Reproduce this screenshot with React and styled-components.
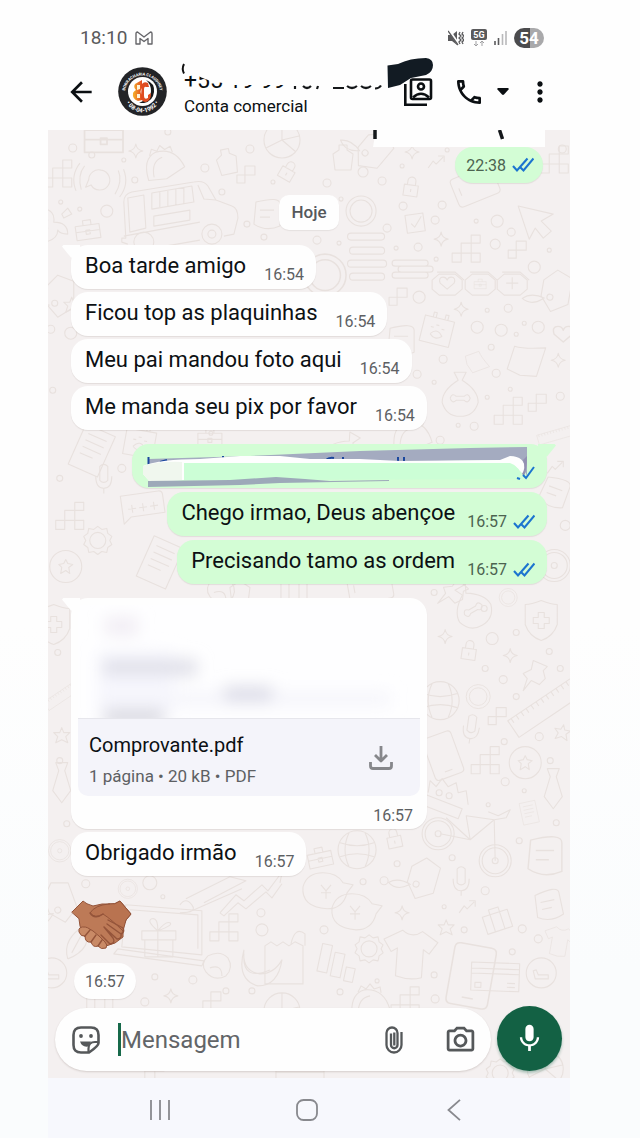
import React from "react";
import styled, { createGlobalStyle, css } from "styled-components";
import { MdArrowBack, MdOutlineCall, MdMoreVert, MdMic, MdOutlinePhotoCamera } from "react-icons/md";

const GlobalStyle = createGlobalStyle`
  *, *::before, *::after { box-sizing: border-box; }
  body { margin: 0; background: #fefefe; font-family: Roboto, "Noto Sans", sans-serif; }
  button { border: 0; padding: 0; background: none; color: inherit; font: inherit; cursor: pointer; }
  svg { display: block; flex: none; }
`;

const Page = styled.div`
  min-height: 100vh;
  display: flex;
  padding: 0 70px 0 48px;
  background: linear-gradient(#fefefe 55%, #fafcfd 85%);
`;

const Phone = styled.div`
  flex: 1;
  min-width: 0;
  display: flex;
  flex-direction: column;
  background: #fefefe;
`;

const StatusBar = styled.div`
  height: 55px;
  padding: 20px 26px 0 32px;
  display: flex;
  align-items: center;
  gap: 8px;
  color: #5a5a5c;
`;

const Clock = styled.time`
  font-size: 19px;
  line-height: 24px;
`;

const StatusIcons = styled.div`
  margin-left: auto;
  display: flex;
  align-items: center;
  gap: 7px;
`;

const Battery = styled.span`
  width: 30px;
  height: 20px;
  border-radius: 10px;
  background: linear-gradient(90deg, #4b4b4d 52%, #a9a9ab 52%);
  color: #fff;
  font-size: 17px;
  font-weight: 700;
  line-height: 20px;
  text-align: center;
`;

const Header = styled.header`
  height: 75px;
  padding: 0 14px 2px 17px;
  display: flex;
  align-items: center;
  color: #0b0f12;
`;

const IconButton = styled.button`
  position: relative;
  width: ${(p) => p.$width || 32}px;
  height: 32px;
  flex: none;
  display: grid;
  place-items: center;
  margin-left: ${(p) => p.$gap || 0}px;
  color: ${(p) => p.$color || "inherit"};
`;

const Avatar = styled.svg`
  margin-left: 21px;
`;

const Contact = styled.div`
  position: relative;
  flex: 1;
  min-width: 0;
  margin: 2px 0 0 17px;
  white-space: nowrap;
`;

const ContactName = styled.h1`
  margin: 0;
  font-size: 23px;
  font-weight: 400;
  line-height: 26px;
`;

const ContactKind = styled.p`
  margin: 0;
  padding-top: 1px;
  font-size: 17px;
  line-height: 22px;
`;

const NameScribble = styled.svg`
  position: absolute;
  left: -4px;
  top: -12px;
`;

const BlackMark = styled.svg`
  position: absolute;
  left: -16px;
  top: -20px;
`;

const Chat = styled.main`
  position: relative;
  isolation: isolate;
  flex: 1;
  display: flex;
  flex-direction: column;
  background: #f4f0f0;
  overflow: hidden;
`;

const Wallpaper = styled.svg`
  position: absolute;
  inset: 0;
  width: 100%;
  height: 100%;
  z-index: -1;
`;

const Messages = styled.div`
  flex: 1;
  padding: 0 23px 7px;
  display: flex;
  flex-direction: column;
`;

const Group = styled.section`
  display: flex;
  flex-direction: column;
  align-items: ${(p) => (p.$out ? "flex-end" : "flex-start")};
  gap: ${(p) => (p.$out ? 4 : 3)}px;
  margin-top: ${(p) => p.$top || 0}px;
`;

const tailShape = css`
  &::before {
    content: "";
    position: absolute;
    top: 0;
    width: 18px;
    height: 14px;
    background: inherit;
    ${(p) =>
      p.$out
        ? "right: -9px; clip-path: polygon(0 0, 92% 0, 100% 10%, 50% 90%, 0 100%);"
        : "left: -9px; clip-path: polygon(100% 0, 8% 0, 0 10%, 50% 90%, 100% 100%);"}
  }
`;

const Bubble = styled.div`
  position: relative;
  display: flex;
  min-height: 44px;
  padding: 0 12px 0 14px;
  gap: ${(p) => (p.$out ? 12 : 18)}px;
  border-radius: 17px;
  background: ${(p) => (p.$out ? "#d3fdd5" : "#fefefe")};
  box-shadow: 0 1px 1px rgba(70, 50, 40, 0.1);
  color: #0c1013;
  ${(p) => p.$tail && tailShape}
`;

const MessageText = styled.span`
  font-size: 22px;
  line-height: 41px;
`;

const Meta = styled.span`
  align-self: flex-end;
  display: flex;
  align-items: center;
  gap: 6px;
  padding-bottom: 4px;
  font-size: 16px;
  line-height: 20px;
  color: ${(p) => (p.$out ? "#4c6350" : "#5d6063")};
`;

const HiddenPhoto = styled.svg`
  margin-right: 2px;
`;

const TimePill = styled.div`
  display: flex;
  align-items: center;
  gap: 6px;
  height: 36px;
  padding: 0 ${(p) => (p.$out ? 9 : 11)}px 0 11px;
  margin: ${(p) => (p.$out ? "-4px 4px 0 0" : "9px 0 0 3px")};
  border-radius: 18px;
  background: ${(p) => (p.$out ? "#d3fdd5" : "#fefefe")};
  box-shadow: 0 1px 1px rgba(70, 50, 40, 0.1);
  color: ${(p) => (p.$out ? "#4c6350" : "#5d6063")};
  font-size: 16px;
`;

const DayLabel = styled.div`
  align-self: center;
  margin-top: 12px;
  padding: 0 12px;
  border-radius: 10px;
  background: #fefefe;
  box-shadow: 0 1px 1px rgba(70, 50, 40, 0.08);
  color: #55585b;
  font-size: 17px;
  font-weight: 500;
  line-height: 35px;
`;

const RedactedBubble = styled(Bubble)`
  padding: 0;
`;

const DocumentCard = styled(Bubble)`
  width: 356px;
  max-width: 100%;
  flex-direction: column;
  gap: 0;
  padding: 7px 7px 0;
`;

const Preview = styled.svg`
  width: 100%;
  height: 113px;
`;

const FileRow = styled.div`
  display: flex;
  align-items: center;
  height: 78px;
  padding: 0 23px 0 11px;
  border-top: 1px solid #e6e6ec;
  border-radius: 0 0 10px 10px;
  background: #f4f4fa;
`;

const FileInfo = styled.div`
  flex: 1;
  padding-top: 4px;
`;

const FileName = styled.div`
  font-size: 20px;
  line-height: 28px;
`;

const FileDetails = styled.div`
  padding-top: 4px;
  font-size: 17px;
  line-height: 26px;
  color: #5d6063;
`;

const FileMeta = styled.div`
  padding: 7px 7px 0;
  text-align: right;
  font-size: 16px;
  line-height: 26px;
  height: 33px;
  color: #5d6063;
`;

const Handshake = styled.svg`
  margin-top: 20px;
`;

const Composer = styled.form`
  display: flex;
  align-items: flex-end;
  gap: 6px;
  padding: 0 8px 7px 7px;
`;

const InputPill = styled.div`
  flex: 1;
  min-width: 0;
  height: 63px;
  display: flex;
  align-items: center;
  padding: 0 15px;
  border-radius: 32px;
  background: #fefefe;
  box-shadow: 0 1px 2px rgba(70, 50, 40, 0.18);
  color: #55585a;
`;

const Caret = styled.span`
  width: 3px;
  height: 33px;
  margin-left: 16px;
  background: #17694a;
`;

const MessageInput = styled.input`
  flex: 1;
  min-width: 0;
  border: 0;
  outline: 0;
  padding: 0;
  background: transparent;
  font: 24px/32px Roboto, "Noto Sans", sans-serif;
  color: #0c1013;
  &::placeholder { color: #626568; opacity: 1; }
`;

const MicButton = styled.button`
  width: 65px;
  height: 65px;
  flex: none;
  display: grid;
  place-items: center;
  border-radius: 50%;
  background: #136144;
  color: #fff;
  box-shadow: 0 2px 3px rgba(20, 97, 68, 0.35);
`;

const NavBar = styled.nav`
  height: 61px;
  display: flex;
  align-items: center;
  justify-content: space-around;
  padding: 2px 42px 0 38px;
  background: #f7f8fd;
  color: #88898e;
`;

const Ticks = () => (
  <svg width="22" height="16" viewBox="0 0 22 16" fill="none" stroke="#1c74cf" strokeWidth="2.1">
    <path d="M1 9l4 4.500L15.500 1.500M8.500 10.500l3 3L21.500 1.500" />
  </svg>
);

/* Small drawings that are scattered over the chat background, each centred on 0,0. */
const doodles = {
  sparkle: "M0-7Q1-1 7 0Q1 1 0 7Q-1 1-7 0Q-1-1 0-7Z",
  star: "M0-8l2 5 6 0-4 4 2 6-6-3-6 3 2-6-4-4 6 0z",
  squares: "M-14 4h9v9h-9zM-5-6h10v10h-10zM5-14h9v8h-9zM5 4h9v9h-9z",
  pair: "M-9 0h8v8h-8zM-1-9h10v9h-10z",
  lock: "M-7-2h14v11h-14zM-4-2v-4a4 4 0 0 1 8 0v4M0 2v3",
  lines: "M-15-24h30a3 3 0 0 1 0 7h-30a3 3 0 0 1 0-7M-13-10h28a3 3 0 0 1 0 7h-28a3 3 0 0 1 0-7M-15 3h32a3 3 0 0 1 0 7h-32a3 3 0 0 1 0-7M-13 16h28a3 3 0 0 1 0 7h-28a3 3 0 0 1 0-7",
  bars: "M-16-8h30a3 3 0 0 1 0 6h-30a3 3 0 0 1 0-6M-10-2h29a3 3 0 0 1 0 6h-29a3 3 0 0 1 0-6M-16 4h30a3 3 0 0 1 0 6h-30a3 3 0 0 1 0-6",
  ring: "M-15 0a15 15 0 1 0 30 0a15 15 0 1 0-30 0M-11 0a11 11 0 1 0 22 0a11 11 0 1 0-22 0",
  disc: "M-16 0a16 16 0 1 0 32 0a16 16 0 1 0-32 0M-3 0a3 3 0 1 0 6 0a3 3 0 1 0-6 0M-13 0a13 13 0 1 0 26 0a13 13 0 1 0-26 0",
  pie: "M-18 0a18 18 0 1 0 36 0a18 18 0 1 0-36 0M0 0v-18M0 0l14 12M0 0l-16 8M0 0l17-4",
  check: "M-9-9h18v18h-18zM-4 0l3 4 8-10",
  checkDisc: "M-15 0a15 15 0 1 0 30 0a15 15 0 1 0-30 0M-8-2l2 8h13v-4l-10 0-2-5z",
  starDisc: "M-16 0a16 16 0 1 0 32 0a16 16 0 1 0-32 0M0-7l2 4 5 1-4 3 1 6-4-3-5 3 1-6-3-3 5-1z",
  cursor: "M-18-16l35 8-12 7 10 10-8 7-8-10-6 11z",
  pill: "M-8-10h16l7 6v9l-7 6h-16l-7-6v-9zM-10-12h18l9 8",
  heart: "M0 6l-7-6q-2-6 3-6 3 0 4 3 1-3 4-3 5 0 3 6z",
  plus: "M-6 0h12M0-6v12",
  tag: "M-14-8l12-12 16 6v26l-16 10-12-14zM-8 8a3 3 0 1 0 6 0a3 3 0 1 0-6 0M-10 10q-14-4-22 4 10 6 20-3",
  bag: "M-15-12h30v26h-30zM-7-12v-5h3v5M5-12v-5h3v5M-6 5q6-8 12 0-6 6-12 0M-7-2h3M-2-5h3M4-2h3",
  sack: "M-6-20h12l-4 8q16 10 16 22-4 14-18 14t-18-14q0-12 16-22zM-10 6q2-6 6-2h8q4-4 6 2-2 6-6 2h-8q-4 4-6-2",
  van: "M-52 32-58 30V26H-54L-56-10Q-56-18-48-20L14-30Q24-32 28-26L36-12 52-6Q58-4 58 6 56 14 54 22L44 24M20 28-26 36M-56 24 20 10M-52-14-36-17-34 16-50 20ZM-28-19 12-26 14-10-28-3ZM-20-20V-5M-12-22V-6M-4-23V-7M4-25V-8M18-27 24-13 36-12M-26 4 10-2V8L-26 14ZM-46 30a10 10 0 1 0 20 0a10 10 0 1 0-20 0M22 22a10 10 0 1 0 20 0a10 10 0 1 0-20 0M28 22a4 4 0 1 0 8 0a4 4 0 1 0-8 0",
  taco: "M-18 12q-2-22 12-26 20-2 26 20l-20 8zM-12 10q0-16 12-18M-12-12l3-6 5 3 4-5 4 5 6-2 1 6",
  chat: "M0-10a10 10 0 1 1-8 16l-5 3 2-8a10 10 0 0 1 11-11M-17-12q-6 10 0 24M17-12q6 10 0 24M-22-14q-8 14 0 28M22-14q8 14 0 28",
  scissors: "M-14-16q14 2 12 14 14 0 14 12-8 0-10-4 0 10-14 12l4-14-8-2 8-6zM6-10l6-6 4 6-8 4z",
  case: "M-12-5h24v14h-24zM-4-5v-5h8v5M-12 1h24M-2 0h4v4h-4z",
  bottle: "M-4-12h8v5l6 4-2 16h-16l-2-16 6-4z",
  note: "M-16-22h32v44h-32zM-10-14h20M-10-7h20M-10 0h20M-10 7h14",
  pad: "M-20-12h38q4 0 4 4v18h-34l-8 6zM-10-2v8M-14 2h8M1-2v8M-3 2h8M12-2v8M8 2h8",
  shield: "M0-20q10 4 16 4v20q-4 12-16 16-12-4-16-16v-20q6 0 16-4M-3-8h6v5h5v6h-5v5h-6v-5h-5v-6h5z",
  pin: "M-2-12l14 6-4 4 2 8-6 6-8-4-8 10 4-12-4-5 8-4z",
  ruler: "M-42-10h84v20h-84zM-38-10v5M-32-10v5M-26-10v5M-20-10v5M-14-10v5M-8-10v5M-2-10v5M4-10v5M10-10v5M16-10v5M22-10v5M28-10v5M34-10v5",
  mobile: "M-11-22h22q4 0 4 4v36q0 4-4 4h-22q-4 0-4-4v-36q0-4 4-4M-4 16h8",
  mic: "M-4-12q4-4 8 0v14q-4 4-8 0zM-8-2q0 12 8 12t8-12M0 10v5",
  tie: "M-6-20h12l-3 8 6 20-9 12-9-12 6-20z",
  globe: "M-19 0a19 19 0 1 0 38 0a19 19 0 1 0-38 0M-8-17q-8 17 0 34M8-17q8 17 0 34M-17-7q17 6 34 0M-17 7q17-6 34 0",
  blob: "M-22-4q4-14 20-14 14 0 20 10l10 2-6 8q-4 16-20 16-26-2-24-22M-4-6l5 6 5-6M1 0v8M-4 2h10",
  shirt: "M-10-22q10 8 20 0l16 10-8 12-6-4v28q-12 4-26 0v-28l-6 4-8-12z",
  gear: "M-8 0a8 8 0 1 0 16 0a8 8 0 1 0-16 0M0-14l4 3 5-1 1 5 4 3-2 4 2 4-4 3-1 5-5-1-4 3-4-3-5 1-1-5-4-3 2-4-2-4 4-3 1-5 5 1z",
  columns: "M-18-16h10v28h-10zM-4-10h10v24h-10zM10 2h9v14h-9z",
  card: "M-24-14h48v28h-48zM-24-8h48M-24-3h48M-20 6h6v5h-6zM12 6h8M12 10h8",
  zigzag: "M-34 18l16-18 8 6 18-16 6 6 12-16 2-2-2 10M-34 18l4 3 14-13 8 6 20-17 6 6 10-14",
  arrow: "M-9 6l5-7 3 3 7-7M1-6h6v6",
  laptop: "M-34-30l76 6v44l-80-8zM-30-25l68 5v34M-42 14l86 12-2 5-88-12z",
  gift: "M-16-8h34v9h-34zM-13 1h28v17h-28zM0-8v26M0-8q-12-10-6-12t6 12q8-10 12-8t-12 8",
  cookie: "M-10-10q12-6 20 2 6 10-2 18-12 6-20-4-6-8 2-16M-8 2q12-4 12 8",
  banana: "M-18-16q-2 22 16 24 14 0 22-14-4 26-24 26-22-6-14-36M-18-12q-2 28 26 16",
  grocer: "M-20-20l6-4 6 4 6-4 6 4 6-4 8 4v38h-38zM6-22q4-18 14-10v12",
  leaf: "M-12 18q-6-20 18-34 8 24-18 34M-8 12l12-22",
  scroll: "M-20 14q6-8 12 0t-12 8M-14 8l44-22 16 4-42 22M-8 20l50-22",
  case2: "M-13-8h26v18h-26zM-5-8v-5h10v5M-5-8v18M5-8v18",
  frame: "M-15-12q10 0 30-8v30l-16 4-14-2z",
  basket: "M-24-4l36 14-4 10-36-14zM-22-6l2-12 6 6 6-8 6 8 8-4 2 10 8-2 2 14M-14-6a3 3 0 1 0 6 0a3 3 0 1 0-6 0M-4-3a3 3 0 1 0 6 0a3 3 0 1 0-6 0",
  bike: "M-40-12-10-6M-34-28-10-6 14-26-14-30-10-6M14-26 15 15M8-34 18-30 30-36 26-28 14-26",
  cloth: "M-12-12q24-6 24 2v22q-14 6-26-2zM-8-4h14M-8 3h10",
};

const placed = [
  ["van", 180, 212], ["taco", 164, 165, -12], ["chat", 100, 180, 8], ["pie", 282, 140], ["bottle", 227, 161, -12],
  ["lock", 288, 171, 30], ["squares", 58, 174], ["pair", 246, 175], ["sparkle", 136, 151], ["scissors", 56, 224],
  ["case", 88, 230, -8], ["cloth", 268, 214], ["case", 104, 138, 0, 1.6], ["bottle", 343, 157], ["sparkle", 412, 152],
  ["arrow", 437, 162], ["lock", 411, 187, 8], ["mobile", 475, 186, 68], ["squares", 554, 160], ["tag", 374, 150, 40],
  ["ring", 361, 211], ["check", 415, 223, -8], ["cursor", 536, 222], ["sparkle", 441, 239], ["lines", 366, 257],
  ["bars", 411, 268], ["pill", 447, 284], ["heart", 447, 283], ["pill", 480, 284], ["case", 480, 284, 0, 0.5],
  ["pill", 512, 284], ["plus", 512, 283], ["tag", 556, 290, 10], ["squares", 466, 249], ["pair", 517, 250],
  ["pair", 398, 297], ["sparkle", 461, 309], ["bag", 437, 330, 14], ["sack", 460, 392], ["frame", 525, 362, 18],
  ["sparkle", 558, 360], ["heart", 563, 334, 0, 1.3], ["frame", 475, 362, 70, 0.6], ["squares", 508, 411], ["pair", 537, 403],
  ["ring", 325, 275, 0, 1.4], ["cloth", 402, 340, 0, 1], ["sack", 345, 452, 30], ["ruler", 558, 434, -16, 0.5],
  ["star", 72, 305], ["tag", 60, 295], ["note", 92, 450, 24], ["bag", 140, 442, 10], ["case", 210, 438],
  ["taco", 412, 436], ["arrow", 556, 467], ["disc", 554, 565], ["cloth", 555, 492, 20], ["pad", 142, 505, -8],
  ["note", 160, 562, 24], ["squares", 70, 516], ["starDisc", 66, 566], ["mic", 104, 478], ["gear", 98, 540],
  ["case2", 294, 590], ["cookie", 222, 590], ["mobile", 370, 586, 80], ["bottle", 240, 590],
  ["pin", 455, 590, 20], ["shield", 541, 620], ["ring", 508, 597, 0, 0.6], ["sack", 470, 604, -30], ["lock", 469, 650, 8],
  ["sparkle", 445, 636], ["sparkle", 510, 655], ["pin", 535, 672], ["ring", 478, 696, 0, 0.8], ["ruler", 548, 705, -34],
  ["mobile", 443, 755, -20], ["globe", 440, 700], ["mic", 471, 728, 8], ["pair", 497, 716], ["squares", 485, 760],
  ["starDisc", 525, 762], ["tie", 553, 788], ["star", 562, 732, 10], ["basket", 450, 798], ["disc", 438, 833],
  ["disc", 495, 860], ["bike", 480, 845], ["note", 529, 812, -12, 0.5], ["globe", 357, 849], ["case", 320, 857, -12],
  ["lock", 394, 838, -12], ["tag", 423, 877, 16], ["mic", 461, 880], ["cloth", 546, 855, 0, 1.3], ["blob", 325, 890],
  ["blob", 354, 911], ["sparkle", 402, 912], ["case2", 497, 920, -18], ["star", 446, 927], ["shirt", 411, 952, 4],
  ["gear", 369, 948], ["columns", 337, 962, 12], ["mobile", 471, 975, 10, 1.4], ["card", 495, 976, 2], ["checkDisc", 541, 972],
  ["cloth", 549, 904, -12], ["arrow", 468, 906], ["taco", 370, 1003], ["squares", 405, 1000], ["scroll", 200, 890],
  ["zigzag", 254, 894], ["laptop", 160, 934], ["gift", 158, 938], ["squares", 224, 927], ["cookie", 218, 965],
  ["banana", 262, 965], ["grocer", 285, 965], ["sparkle", 171, 995], ["checkDisc", 52, 972], ["pie", 282, 1010],
  ["disc", 128, 888, 0, 0.6], ["tag", 60, 900, -20], ["case2", 100, 1004], ["pair", 212, 1000], ["leaf", 80, 940],
  ["shield", 54, 624], ["ruler", 64, 694, -34, 0.5], ["tie", 62, 782], ["star", 62, 735], ["disc", 60, 850, 0, 0.7],
  ["gear", 500, 1072], ["squares", 150, 1076], ["shirt", 560, 940, 10, 0.6], ["pie", 545, 1068], ["card", 300, 1074],
];

const dots = [
  [73, 148, 4], [92, 155, 3], [124, 160, 2], [168, 132, 3], [135, 180, 3], [205, 168, 4], [250, 149, 4], [273, 182, 2], [61, 202, 2],
  [80, 209, 2], [107, 211, 6], [222, 192, 3], [247, 224, 3], [264, 237, 3], [327, 183, 4], [363, 172, 5], [341, 199, 2], [382, 181, 4],
  [402, 166, 2], [447, 150, 2], [480, 137, 4], [562, 149, 4], [403, 206, 4], [442, 205, 4], [435, 220, 4], [387, 228, 4], [497, 221, 6],
  [476, 221, 2], [511, 232, 4], [317, 240, 4], [339, 243, 2], [396, 248, 2], [418, 247, 4], [436, 259, 2], [534, 267, 6], [549, 250, 2],
  [495, 244, 5], [419, 297, 6], [487, 310, 2], [508, 308, 4], [477, 327, 6], [501, 330, 6], [538, 327, 6], [524, 323, 2], [516, 334, 2],
  [491, 347, 3], [443, 359, 4], [417, 374, 4], [496, 373, 4], [434, 382, 2], [487, 397, 2], [510, 389, 2], [560, 396, 4], [458, 425, 2],
  [474, 426, 4], [53, 390, 3], [51, 329, 4], [71, 333, 6], [60, 478, 3], [122, 468, 4], [440, 440, 4], [211, 433, 2], [565, 525, 5],
  [434, 592, 3], [484, 608, 3], [492, 638, 6], [516, 632, 3], [549, 651, 3], [485, 668, 3], [560, 668, 3], [503, 679, 4], [516, 696, 3],
  [539, 736, 4], [504, 741, 3], [550, 760, 3], [505, 781, 4], [488, 804, 2], [524, 790, 2], [556, 822, 3], [519, 840, 3], [452, 857, 3],
  [397, 863, 3], [384, 880, 4], [363, 881, 3], [485, 890, 4], [444, 906, 2], [522, 928, 4], [538, 938, 4], [464, 929, 3], [512, 951, 3],
  [434, 974, 3], [377, 980, 2], [340, 991, 3], [435, 998, 4], [324, 929, 4], [261, 912, 4], [262, 929, 6], [155, 976, 3], [193, 979, 4],
  [145, 1001, 4], [226, 990, 3], [252, 990, 3], [163, 896, 2], [86, 883, 4], [150, 882, 7], [58, 652, 3], [60, 760, 3], [67, 823, 3],
];

const ChatWallpaper = () => (
  <Wallpaper viewBox="48 130 522 947" preserveAspectRatio="xMidYMin slice" fill="none" stroke="#e8e1de" strokeWidth="1.1" strokeLinejoin="round" aria-hidden="true">
    {placed.map(([kind, x, y, turn = 0, size = 1], i) => (
      <path key={i} d={doodles[kind]} transform={`translate(${x} ${y}) rotate(${turn}) scale(${size})`} />
    ))}
    {dots.map(([x, y, r], i) => (
      <circle key={i} cx={x} cy={y} r={r} />
    ))}
  </Wallpaper>
);

const Message = ({ text, time, out, tail }) => (
  <Bubble $out={out} $tail={tail}>
    <MessageText>{text}</MessageText>
    <Meta $out={out}>
      {time}
      {out && <Ticks />}
    </Meta>
  </Bubble>
);

const StatusRow = () => (
  <StatusBar>
    <Clock>18:10</Clock>
    <svg width="18" height="14" viewBox="0 0 18 14" fill="none" stroke="#66666a" strokeWidth="1.4" strokeLinejoin="round">
      <path d="M1 13V2.500Q1 1 2.500 1L9 6 15.500 1Q17 1 17 2.500V13H13V7.500L9 10.500 5 7.500V13Z" />
    </svg>
    <StatusIcons>
      <svg width="16" height="16" viewBox="0 0 16 16" fill="#5a5a5c">
        <path d="M0 5h4l5-4v14l-5-4H0z" />
        <path d="M1 0l10 15" stroke="#fefefe" strokeWidth="2.500" />
        <path d="M0 1l10 14M12 2l-1 2 2 2-2 2 2 2-2 2 1 2M15 2l-1 2 2 2-2 2 2 2-2 2 1 2" fill="none" stroke="#5a5a5c" strokeWidth="1.300" />
      </svg>
      <svg width="16" height="18" viewBox="0 0 16 18">
        <rect width="16" height="11" rx="2" fill="#5a5a5c" />
        <text x="8" y="9" textAnchor="middle" fontSize="9" fontWeight="700" fill="#fff" fontFamily="Roboto, sans-serif">5G</text>
        <path d="M5 12v5M3 15l2 2 2-2M11 17v-5M9 14l2-2 2 2" fill="none" stroke="#a0a0a2" />
      </svg>
      <svg width="13" height="15" viewBox="0 0 13 15">
        <path d="M1 11v4M4.500 8v7" stroke="#5a5a5c" strokeWidth="1.600" />
        <path d="M8.500 4v11M12 1v14" stroke="#b9b9bb" strokeWidth="1.600" />
      </svg>
      <Battery>54</Battery>
    </StatusIcons>
  </StatusBar>
);

const ContactAvatar = () => (
  <Avatar width="49" height="49" viewBox="0 0 49 49" role="img" aria-label="Foto do contato">
    <defs>
      <linearGradient id="flame" x1="0" x2="1">
        <stop offset="0" stopColor="#f7b52c" />
        <stop offset="1" stopColor="#e2471f" />
      </linearGradient>
      <path id="upperArc" d="M7 26a17.500 17.500 0 1 1 35 0" />
      <path id="lowerArc" d="M6 26a18.500 19.500 0 0 0 37 0" />
    </defs>
    <circle cx="24.500" cy="24.500" r="24.300" fill="#232427" />
    <circle cx="24.500" cy="24.500" r="14.500" fill="#fff" />
    <g fill="#fff" fontFamily="Roboto, sans-serif" fontWeight="700">
      <text fontSize="4"><textPath href="#upperArc" startOffset="50%" textAnchor="middle">BORRACHARIA CLAUDINEY</textPath></text>
      <text fontSize="6"><textPath href="#lowerArc" startOffset="50%" textAnchor="middle">• 08-04-1992 •</textPath></text>
    </g>
    <path d="M28 13q9 3 8 12-1 9-10 11h-5l6-3q6-2 6-9 0-7-5-11z" fill="#17181a" />
    <path d="M17 17l7-4v8q-3 4 0 7v5l-4 1q-6-2-5-8 1-2 3-3-3-3-1-6z" fill="url(#flame)" />
    <path d="M19 18v5l3-1v-4zM19 27v4h3v-4z" fill="#fff3d5" />
    <path d="M24 17q2-3 6-1l1 4h-3q-2-1-2 3v6q0 4 4 2v-3l3-2q0 8-5 9-5 0-5-6z" fill="#df4d22" />
  </Avatar>
);

const TopBar = () => (
  <Header>
    <IconButton type="button" aria-label="Voltar"><MdArrowBack size={32} /></IconButton>
    <ContactAvatar />
    <Contact>
      <ContactName>+55 19 99</ContactName>
      <ContactKind>Conta comercial</ContactKind>
      <NameScribble width="216" height="37" viewBox="180 56 216 37" aria-hidden="true">
        <path d="M178 56H396V85H232Q226 83 214 82L205 79 196 75 184 77 178 75Z" fill="#fefefe" />
        <path d="M184 64q-2.500 5 0 9.500" fill="none" stroke="#111" strokeWidth="2" />
        <g fill="none" stroke="#15181a" strokeWidth="2.200">
          <path d="M295 86v3M303 86q4 4 8 0M318 86l-1 3M333 88h11M347 86q5 4 10 0M361 86q5 4 10 0M375 88.500q4 0 6-3" />
        </g>
      </NameScribble>
    </Contact>
    <IconButton type="button" aria-label="Ver contato">
      <svg width="30" height="30" viewBox="0 0 30 30" fill="none" stroke="currentColor" strokeWidth="2.600">
        <rect x="8" y="2.500" width="20" height="19.500" rx="1.500" />
        <circle cx="18" cy="9.500" r="3" />
        <path d="M10 20.500q8-7.500 16 0M2.300 7v20.700H24" />
      </svg>
      <BlackMark width="48" height="34" viewBox="386 55 48 34" aria-hidden="true">
        <path d="M387.500 64.500 398 63Q410 57 426 57Q433 58 433 64 433 71 426 74L411 77 400 84 388 87Z" fill="#121b23" />
      </BlackMark>
    </IconButton>
    <IconButton type="button" aria-label="Ligar" $gap={19}><MdOutlineCall size={32} /></IconButton>
    <IconButton type="button" aria-label="Opções de ligação" $gap={8} $width={20}>
      <svg width="12" height="7" viewBox="0 0 12 7" fill="currentColor"><path d="M1 0h10l1 1-5 5.500q-1 .8-2 0L0 1z" /></svg>
    </IconButton>
    <IconButton type="button" aria-label="Mais opções" $gap={11}><MdMoreVert size={32} /></IconButton>
  </Header>
);

const HandshakeEmoji = () => (
  <Handshake width="61" height="52" viewBox="0 0 61 52" role="img" aria-label="Aperto de mãos">
    <g stroke="#94543a" strokeWidth="1" strokeLinejoin="round" strokeLinecap="round">
      <path d="M1 13 12 2Q15 5 22 7L31 5 38 5Q44 6 49 2L60 15 55 21 52 28 52 38 44 44 32 48 14 38 9 27 8 20Z" fill="#bd7a57" />
      <path d="M38 5Q44 6 49 2L60 15 55 21 52 32Q40 20 32 15Q24 20 19 14Q24 6 38 5Z" fill="#b97350" />
      <path d="M14 28q-7-1-6 5 2 5 6 4 0 7 6 6 2 6 7 4 3 4 8 2 2-3-1-6l-6-6-6-5-5-3z" fill="#c98a66" />
      <path d="M32 15Q24 21 19 14M33 28l13 12q5 0 4-5L36 25M50 35q4-2 2-6L37 21M33 28l9 11q3 5-3 6l-9-9M14 37l5-6M20 43l5-7M27 47l4-6" fill="none" strokeWidth="1.400" />
    </g>
  </Handshake>
);

const ReceiptDocument = () => (
  <DocumentCard $tail>
    <Preview viewBox="78 604 342 112" preserveAspectRatio="none" aria-hidden="true">
      <defs>
        <filter id="soften" x="-50%" y="-80%" width="200%" height="260%"><feGaussianBlur stdDeviation="8" /></filter>
      </defs>
      <rect x="78" y="604" width="342" height="112" fill="#fefeff" />
      <g filter="url(#soften)">
        <rect x="105" y="616" width="33" height="18" fill="#f1edf4" />
        <rect x="98" y="650" width="75" height="62" fill="#f7f7fe" />
        <rect x="103" y="658" width="94" height="16" fill="#dfdfe8" />
        <rect x="100" y="690" width="290" height="14" fill="#f5f5fb" />
        <rect x="224" y="685" width="48" height="14" fill="#dadae6" />
        <rect x="104" y="708" width="60" height="14" fill="#d6d6de" />
      </g>
    </Preview>
    <FileRow>
      <FileInfo>
        <FileName>Comprovante.pdf</FileName>
        <FileDetails>1 página • 20 kB • PDF</FileDetails>
      </FileInfo>
      <IconButton type="button" aria-label="Baixar" $color="#86878b">
        <svg width="26" height="26" viewBox="0 0 26 26" fill="none" stroke="currentColor" strokeWidth="2.800" strokeLinejoin="round">
          <path d="M13 1v14M7 10l6 6 6-6M2.500 17v4q0 2.500 2.500 2.500h16q2.500 0 2.500-2.500v-4" />
        </svg>
      </IconButton>
    </FileRow>
    <FileMeta>16:57</FileMeta>
  </DocumentCard>
);

const CoveredMessage = () => (
  <RedactedBubble $out $tail>
    <svg width="415" height="44" viewBox="132 444 415 44" role="img" aria-label="Mensagem ocultada">
      <path d="M148 459 250 456 360 451 470 448 527 447V476Q522 464 515 460L148 465Z" fill="#a4abc0" />
      <path d="M148.500 457v9M160 462l7-2M223 456v4M326 460q3-3 8-2M343 457v3M398 457v4M404 457v4" stroke="#1b479d" strokeWidth="2" fill="none" />
      <path d="M143 466Q160 459 200 459L240 456 280 456 310 459 360 459 400 461 500 460 510 456Q525 456 525 470L523 474 515 466 400 464H184V480L150 482 143 474Z" fill="#fefefe" />
      <path d="M143 466Q160 461 182 462V480L150 482 143 474Z" fill="#f0f7ee" />
      <path d="M184 463H510Q520 466 522 479L184 480Z" fill="#ccfed6" />
      <path d="M148 481 230 480 276 477 305 479 330 481 389 480 389 481 280 483 240 485 148 487Z" fill="#9da9b9" />
      <path d="M527 456Q527 470 524 476L522 474Q526 468 523 460Z" fill="#9390b2" />
      <path d="M517 478l3 1M523 475l3 3 8-11" stroke="#1c74cf" strokeWidth="2" fill="none" />
    </svg>
  </RedactedBubble>
);

const MessageComposer = () => (
  <Composer onSubmit={(e) => e.preventDefault()}>
    <InputPill>
      <IconButton type="button" aria-label="Figurinhas">
        <svg width="28" height="28" viewBox="0 0 28 28" fill="none" stroke="currentColor" strokeWidth="2.600" strokeLinejoin="round">
          <path d="M9 1.500h10q7.500 0 7.500 7.500v8Q26.500 20 17 26.500H9Q1.500 26.500 1.500 19V9Q1.500 1.500 9 1.500Z" />
          <path d="M26 16h-3q-6.500 0-6.500 6.500v3.500" strokeWidth="2.200" />
          <path d="M8 15.500h11l-3 5q-6 1-8-5z" fill="currentColor" stroke="none" />
          <circle cx="9" cy="10" r="1.900" fill="currentColor" stroke="none" />
          <circle cx="19" cy="10" r="1.900" fill="currentColor" stroke="none" />
        </svg>
      </IconButton>
      <Caret />
      <MessageInput type="text" aria-label="Mensagem" placeholder="Mensagem" />
      <IconButton type="button" aria-label="Anexar">
        <svg width="18" height="28" viewBox="0 0 18 28" fill="none" stroke="currentColor" strokeWidth="2.300">
          <path d="M16.500 6v13a7.500 7.500 0 0 1-15 0V7a5.500 5.500 0 0 1 11 0v12a3 3 0 0 1-6.500 0V7.500M9.300 6.500v13" />
        </svg>
      </IconButton>
      <IconButton type="button" aria-label="Câmera" $gap={34}><MdOutlinePhotoCamera size={33} /></IconButton>
    </InputPill>
    <MicButton type="button" aria-label="Gravar áudio"><MdMic size={33} /></MicButton>
  </Composer>
);

export default function App() {
  return (
    <>
      <GlobalStyle />
      <Page>
        <Phone>
          <StatusRow />
          <TopBar />
          <Chat>
            <ChatWallpaper />
            <Messages>
              <Group $out>
                <HiddenPhoto width="172" height="17" viewBox="0 0 172 17" aria-hidden="true">
                  <path d="M0 17 3 0H172V17Z" fill="#fefefe" />
                  <path d="M2 0v9M126.500 0l3 9" stroke="#15181b" strokeWidth="3.500" />
                </HiddenPhoto>
                <TimePill $out>22:38<Ticks /></TimePill>
              </Group>
              <DayLabel>Hoje</DayLabel>
              <Group $top={15}>
                <Message text="Boa tarde amigo" time="16:54" tail />
                <Message text="Ficou top as plaquinhas" time="16:54" />
                <Message text="Meu pai mandou foto aqui" time="16:54" />
                <Message text="Me manda seu pix por favor" time="16:54" />
              </Group>
              <Group $out $top={14}>
                <CoveredMessage />
                <Message text="Chego irmao, Deus abençoe" time="16:57" out />
                <Message text="Precisando tamo as ordem" time="16:57" out />
              </Group>
              <Group $top={14}>
                <ReceiptDocument />
                <Message text="Obrigado irmão" time="16:57" />
                <HandshakeEmoji />
                <TimePill as="time">16:57</TimePill>
              </Group>
            </Messages>
            <MessageComposer />
          </Chat>
          <NavBar aria-label="Sistema">
            <IconButton type="button" aria-label="Recentes">
              <svg width="20" height="20" viewBox="0 0 20 20" stroke="currentColor" strokeWidth="1.800"><path d="M1 0v20M10 0v20M19 0v20" /></svg>
            </IconButton>
            <IconButton type="button" aria-label="Início">
              <svg width="22" height="22" viewBox="0 0 22 22" fill="none" stroke="currentColor" strokeWidth="1.800"><rect x="1" y="1" width="20" height="20" rx="6.500" /></svg>
            </IconButton>
            <IconButton type="button" aria-label="Retornar">
              <svg width="14" height="22" viewBox="0 0 14 22" fill="none" stroke="currentColor" strokeWidth="1.800"><path d="M13 .8 1.500 11 13 21.200" /></svg>
            </IconButton>
          </NavBar>
        </Phone>
      </Page>
    </>
  );
}
